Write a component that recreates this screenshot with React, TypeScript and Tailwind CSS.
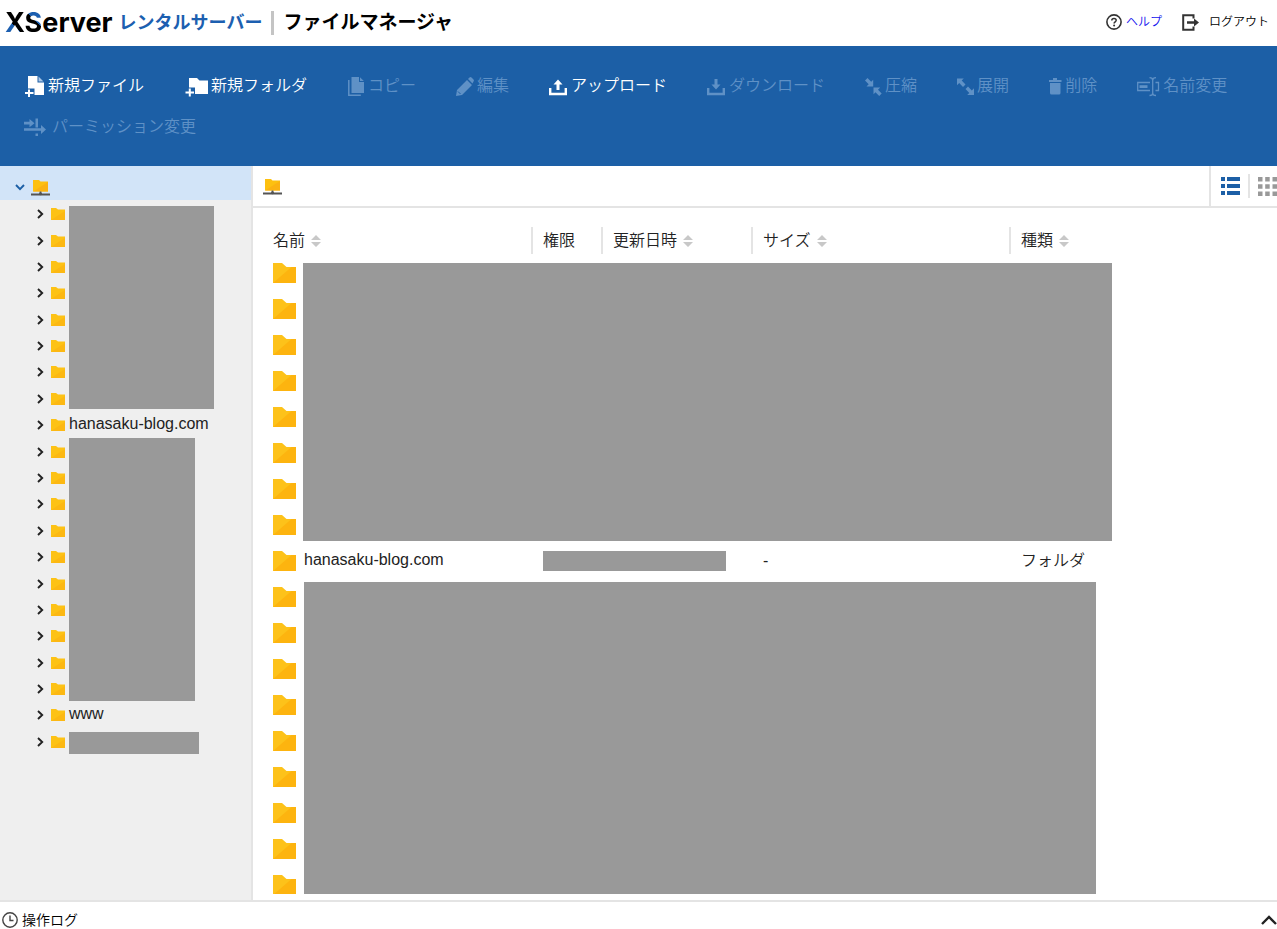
import React from "react";

type IconProps = { className?: string };

function NewFileIcon() {
  return (
    <svg width="22" height="22" viewBox="0 0 22 22" className="shrink-0" aria-hidden="true">
      <path d="M4 1h9.500v6.500H20V20h-9.500v-6.500H4z" fill="#fff" />
      <path d="M14.500 1.500l5 5h-5z" fill="#a9c6e6" />
      <path d="M5 14.500v7.500M1 18h8.500" stroke="#fff" strokeWidth="2" fill="none" />
    </svg>
  );
}

function NewFolderIcon() {
  return (
    <svg width="26" height="22" viewBox="0 0 26 22" className="shrink-0" aria-hidden="true">
      <path d="M5 3h8l2.500 2.500H24V19H11v-6.500H5z" fill="#fff" />
      <path d="M5.800 13.500v8M1.500 17.500h8.500" stroke="#fff" strokeWidth="2" fill="none" />
    </svg>
  );
}

function CopyIcon() {
  return (
    <svg width="20" height="22" viewBox="0 0 20 22" className="shrink-0" aria-hidden="true">
      <path d="M4.500 2h7.500v5h5v11H4.500z" fill="currentColor" />
      <path d="M13 2.200l3.800 3.800H13z" fill="currentColor" />
      <path d="M1.800 5v15.200h12" stroke="currentColor" strokeWidth="1.500" fill="none" />
    </svg>
  );
}

function EditIcon() {
  return (
    <svg width="20" height="22" viewBox="0 0 20 22" className="shrink-0" aria-hidden="true">
      <path d="M0 21l1-6L11 5l5 5L6 20z M12 4l1.500-1.500q1-.8 2 0l2 2q1 1 0 2L16.500 8.500z" fill="currentColor" />
      <path d="M2 16.500l2.500 2.500" stroke="#1c5fa6" strokeWidth="1" />
    </svg>
  );
}

function TransferIcon({ down = false }: { down?: boolean }) {
  return (
    <svg width="20" height="22" viewBox="0 0 20 22" className="shrink-0" aria-hidden="true">
      <path d="M1.200 13v6h15.600v-6" stroke="currentColor" strokeWidth="2.400" fill="none" />
      {down ? (
        <path d="M7.500 4h3v5.500h3L9 14.500 4.500 9.500h3z" fill="currentColor" />
      ) : (
        <path d="M7.500 15h3V9.500h3L9 4.500 4.500 9.500h3z" fill="currentColor" />
      )}
    </svg>
  );
}

function CompressIcon() {
  return (
    <svg width="18" height="22" viewBox="0 0 18 22" className="shrink-0" aria-hidden="true">
      <path d="M8.200 11.500H1.500L3.700 9.300 0 5.500 2.500 3 6.200 6.800 8.200 4.800z" fill="currentColor" />
      <path d="M8.500 12.500h6.700L13 14.700l3.700 3.800-2.500 2.500-3.700-3.800-2 2z" fill="currentColor" />
    </svg>
  );
}

function ExpandIcon() {
  return (
    <svg width="18" height="22" viewBox="0 0 18 22" className="shrink-0" aria-hidden="true">
      <path d="M0 3.500h6.800L4.700 5.600 8.500 9.400 6 11.900 2.200 8.100 0 10.200z" fill="currentColor" />
      <path d="M17 20h-6.800l2.100-2.100-3.800-3.800 2.500-2.500 3.800 3.800 2.200-2.100z" fill="currentColor" />
    </svg>
  );
}

function TrashIcon() {
  return (
    <svg width="14" height="22" viewBox="0 0 14 22" className="shrink-0" aria-hidden="true">
      <path d="M0 5h4V3h4v2h4.500v2H0z M1 8h10.500v10q0 1.500-1.500 1.500H2.500Q1 19.500 1 18z" fill="currentColor" />
    </svg>
  );
}

function RenameIcon() {
  return (
    <svg width="24" height="22" viewBox="0 0 24 22" className="shrink-0" aria-hidden="true">
      <g stroke="currentColor" strokeWidth="1.300" fill="none">
        <path d="M13 7.500H.7v8H13M18.500 7.500h3v8h-3" />
        <path d="M12.500 2.700q3.200 0 3.200 2.500v13q0 2.300-3.200 2.300M19 2.700q-3.300 0-3.300 2.500M19 20.500q-3.300 0-3.300-2.300" />
      </g>
      <path d="M2.500 10.200h8v2.800h-8z" fill="currentColor" />
    </svg>
  );
}

function PermissionIcon() {
  return (
    <svg width="24" height="22" viewBox="0 0 24 22" className="shrink-0" aria-hidden="true">
      <g fill="currentColor">
        <path d="M0 5.800h5.500V3L10.500 7.200 5.500 11.300V8.600H0z" />
        <path d="M11.500 2.500H14v9h-2.500z M11.500 17.500H14V20h-2.500z" />
        <path d="M0 12.200h17V9l5 4.500-5 4.500v-3.300H0z" />
      </g>
    </svg>
  );
}

function NetworkFolderIcon() {
  return (
    <svg width="19" height="17" viewBox="0 0 19 17" className="shrink-0" aria-hidden="true">
      <path d="M2 1h6l1.500 1.500H17V12.500H2z" fill="#fdc010" />
      <path d="M2 12.500L17 3v9.500z" fill="#fbb212" />
      <path d="M9.500 12.500v2M0 15.500h19" stroke="#555" strokeWidth="1.800" />
      <circle cx="9.500" cy="14.700" r="1.500" fill="#555" />
    </svg>
  );
}

function SmallFolder() {
  return (
    <svg width="14" height="12" viewBox="0 0 14 12" className="shrink-0" aria-hidden="true">
      <path d="M0 0h5l2 1.500h7V12H0z" fill="#fdc215" />
      <path d="M0 12L14 3v9z" fill="#fcb813" />
    </svg>
  );
}

function LargeFolder() {
  return (
    <svg width="23" height="20" viewBox="0 0 23 20" className="block" aria-hidden="true">
      <path d="M0 0h9l4.500 4H23v16H0z" fill="#fdc21a" />
      <path d="M0 20L18.500 4H23v16z" fill="#fdb40f" />
    </svg>
  );
}

function Chevron({ className }: IconProps) {
  return (
    <svg width="10" height="10" viewBox="0 0 10 10" className={className} aria-hidden="true">
      <path d="M3 1l4.200 4L3 9" fill="none" stroke="currentColor" strokeWidth="1.900" />
    </svg>
  );
}

function SortIcon() {
  return (
    <svg width="10" height="12" viewBox="0 0 10 12" className="shrink-0" aria-hidden="true">
      <path d="M5 0l5 5H0zM5 12L0 7h10z" fill="#c8c8c8" />
    </svg>
  );
}

const tools = [
  { label: "新規ファイル", icon: <NewFileIcon />, enabled: true, box: "w-6" },
  { label: "新規フォルダ", icon: <NewFolderIcon />, enabled: true, box: "w-[27px]" },
  { label: "コピー", icon: <CopyIcon />, enabled: false, box: "w-[21px]" },
  { label: "編集", icon: <EditIcon />, enabled: false, box: "w-[21px]" },
  { label: "アップロード", icon: <TransferIcon />, enabled: true, box: "w-[22px]" },
  { label: "ダウンロード", icon: <TransferIcon down />, enabled: false, box: "w-[22px]" },
  { label: "圧縮", icon: <CompressIcon />, enabled: false, box: "w-5" },
  { label: "展開", icon: <ExpandIcon />, enabled: false, box: "w-5" },
  { label: "削除", icon: <TrashIcon />, enabled: false, box: "w-4" },
  { label: "名前変更", icon: <RenameIcon />, enabled: false, box: "w-[26px]" },
  { label: "パーミッション変更", icon: <PermissionIcon />, enabled: false, box: "w-7" },
];

function Header() {
  return (
    <header className="flex h-[46px] shrink-0 items-center justify-between pr-2 pl-[5px]">
      <h1 className="flex items-center font-bold text-black">
        <span className="font-['Inter'] text-[27px] leading-8">
          <span className="bg-[linear-gradient(45deg,#1c5fb0_42%,#000_42%)] bg-clip-text text-transparent">X</span>
          <span className="bg-[linear-gradient(45deg,#000_57%,#1c5fb0_57%)] bg-clip-text text-transparent">S</span>
          erver
        </span>
        <span className="ml-[6px] text-[18px] leading-8 text-[#1c5fb0]">レンタルサーバー</span>
        <span className="mx-[9px] h-6 w-[3px] bg-[#c4c4c4]" />
        <span className="text-[19px] leading-8">ファイルマネージャ</span>
      </h1>
      <nav className="flex items-center gap-5 pb-[2px] text-xs">
        <a href="#help" className="flex items-center gap-1 text-[#1010ee]">
          <svg width="16" height="16" viewBox="0 0 16 16" aria-hidden="true">
            <circle cx="8" cy="8" r="7.100" fill="none" stroke="#333" strokeWidth="1.600" />
            <path d="M5.800 6.500q0-2.100 2.200-2.100t2.200 1.900c0 1.500-2.100 1.500-2.100 3.200" fill="none" stroke="#333" strokeWidth="1.500" />
            <circle cx="8.100" cy="11.500" r="1" fill="#333" />
          </svg>
          ヘルプ
        </a>
        <a href="#logout" className="flex items-center gap-[10px] text-black">
          <svg width="17" height="17" viewBox="0 0 17 17" aria-hidden="true">
            <path d="M11.500 4.500V1.200H1.200v14.600h10.300v-3.300" fill="none" stroke="#333" strokeWidth="2" />
            <path d="M5 7.300h7V4.500l5 4-5 4V9.700H5z" fill="#333" />
          </svg>
          ログアウト
        </a>
      </nav>
    </header>
  );
}

function Toolbar() {
  return (
    <div role="toolbar" className="flex shrink-0 flex-wrap gap-x-10 bg-[#1c5fa6] px-6 py-[19px]">
      {tools.map((t) => (
        <button
          key={t.label}
          type="button"
          disabled={!t.enabled}
          className={
            t.enabled
              ? "flex h-[41px] items-center text-base whitespace-nowrap text-white"
              : "flex h-[41px] items-center text-base whitespace-nowrap text-[#5f91c6]"
          }
        >
          <span className={`flex shrink-0 ${t.box}`}>{t.icon}</span>
          {t.label}
        </button>
      ))}
    </div>
  );
}

type Entry = { name?: string; rows: number; className?: string };

const treeEntries: Entry[] = [
  { rows: 8, className: "row-span-8 mt-[6px] mb-[2px] w-[145px] bg-[#999]" },
  { rows: 1, name: "hanasaku-blog.com" },
  { rows: 10, className: "row-span-10 mt-px w-[126px] bg-[#999]" },
  { rows: 1, name: "www" },
  { rows: 1, className: "mt-1 w-[130px] bg-[#999]" },
];

function TreeToggle() {
  return (
    <button type="button" aria-label="フォルダを開く" className="col-start-1 flex items-center gap-[6px] pt-[2px]">
      <Chevron className="text-[#222]" />
      <SmallFolder />
    </button>
  );
}

function Tree() {
  return (
    <aside className="w-[253px] shrink-0 border-r-2 border-[#e4e4e4] bg-[#efefef]">
      <button type="button" aria-label="ルート" className="flex h-[34px] w-full items-center gap-[6px] bg-[#d2e4f8] pt-2 pl-[15px]">
        <Chevron className="rotate-90 text-[#1c5fa6]" />
        <NetworkFolderIcon />
      </button>
      <div className="grid h-[554px] auto-rows-fr grid-cols-[34px_1fr] pl-[35px] text-base text-[#222]">
        {treeEntries.map((e, i) => (
          <React.Fragment key={i}>
            <TreeToggle />
            {e.name ? (
              <a href={`#${e.name}`} className="col-start-2 self-center leading-6">
                {e.name}
              </a>
            ) : (
              <div className={`col-start-2 ${e.className}`} />
            )}
            {Array.from({ length: e.rows - 1 }, (_, r) => (
              <TreeToggle key={r} />
            ))}
          </React.Fragment>
        ))}
      </div>
    </aside>
  );
}

function HeadCell({ label, sortable = true, divided = true }: { label: string; sortable?: boolean; divided?: boolean }) {
  return (
    <div
      className={
        divided
          ? "flex h-[27px] items-center gap-[6px] border-l-2 border-[#e4e4e4] pl-[10px]"
          : "flex h-[27px] items-center gap-[6px]"
      }
    >
      {label}
      {sortable && <SortIcon />}
    </div>
  );
}

function FolderCell() {
  return (
    <td className="h-9 p-0">
      <LargeFolder />
    </td>
  );
}

function FileTable() {
  const fillerRows = (count: number, prefix: string) =>
    Array.from({ length: count }, (_, i) => (
      <tr key={`${prefix}${i}`} className="h-9">
        <FolderCell />
      </tr>
    ));
  return (
    <div className="mb-[6px] min-h-0 flex-1 overflow-hidden pt-[18px] pl-5">
      <table className="w-full table-fixed border-collapse text-left text-base text-[#222]">
        <colgroup>
          <col className="w-[30px]" />
          <col className="w-[228px]" />
          <col className="w-[70px]" />
          <col className="w-[150px]" />
          <col className="w-[258px]" />
          <col />
        </colgroup>
        <thead>
          <tr className="h-[29px]">
            <th colSpan={2} className="p-0 font-[350]"><HeadCell label="名前" divided={false} /></th>
            <th className="p-0 font-[350]"><HeadCell label="権限" sortable={false} /></th>
            <th className="p-0 font-[350]"><HeadCell label="更新日時" /></th>
            <th className="p-0 font-[350]"><HeadCell label="サイズ" /></th>
            <th className="p-0 font-[350]"><HeadCell label="種類" /></th>
          </tr>
        </thead>
        <tbody>
          <tr className="h-9">
            <FolderCell />
            <td rowSpan={8} colSpan={5} className="p-0 pt-[6px]">
              <div className="h-[278px] w-[809px] bg-[#999]" />
            </td>
          </tr>
          {fillerRows(7, "a")}
          <tr className="h-9">
            <FolderCell />
            <td className="p-0 pl-px">
              <a href="#hanasaku-blog.com" className="block pb-[2px] leading-6">hanasaku-blog.com</a>
            </td>
            <td colSpan={2} className="p-0 pl-3">
              <div className="h-5 w-[183px] bg-[#999]" />
            </td>
            <td className="p-0 pl-3">-</td>
            <td className="p-0 pl-3">フォルダ</td>
          </tr>
          <tr className="h-9">
            <FolderCell />
            <td rowSpan={9} colSpan={5} className="p-0 pt-[3px] pl-px align-top">
              <div className="h-[321px] w-[792px] bg-[#999]" />
            </td>
          </tr>
          {fillerRows(8, "b")}
        </tbody>
      </table>
    </div>
  );
}

function PathBar() {
  return (
    <div className="flex h-[42px] shrink-0 items-stretch border-b-2 border-[#e4e4e4]">
      <button type="button" aria-label="ルート" className="mr-auto ml-[10px] flex items-center">
        <NetworkFolderIcon />
      </button>
      <div className="flex items-center border-l-2 border-[#e4e4e4] pl-[10px]">
        <button type="button" aria-label="リスト表示">
          <svg width="19" height="18" viewBox="0 0 19 18" className="block" aria-hidden="true">
            <path d="M0 0h4v4H0zM6 0h13v4H6zM0 7h4v4H0zM6 7h13v4H6zM0 14h4v4H0zM6 14h13v4H6z" fill="#1c5fa6" />
          </svg>
        </button>
        <span className="mx-2 h-6 w-[2px] bg-[#e4e4e4]" />
        <button type="button" aria-label="アイコン表示">
          <svg width="19" height="19" viewBox="0 0 19 19" className="block" aria-hidden="true">
            <path d="M0 0h4.500v4.500H0zM7.200 0h4.500v4.500H7.200zM14.500 0H19v4.500h-4.500zM0 7.200h4.500v4.500H0zM7.200 7.200h4.500v4.500H7.200zM14.500 7.200H19v4.500h-4.500zM0 14.500h4.500V19H0zM7.200 14.500h4.500V19H7.200zM14.500 14.500H19V19h-4.500z" fill="#999" />
          </svg>
        </button>
      </div>
    </div>
  );
}

export default function App() {
  return (
    <div className="flex h-screen flex-col overflow-hidden bg-white font-['Liberation_Sans','Noto_Sans_CJK_JP',sans-serif] font-[350]">
      <Header />
      <Toolbar />
      <div className="flex min-h-0 flex-1">
        <Tree />
        <main className="flex min-w-0 flex-1 flex-col">
          <PathBar />
          <FileTable />
        </main>
      </div>
      <footer className="flex h-[29px] shrink-0 items-center justify-between border-t-2 border-[#e4e4e4] pt-2 text-sm text-black">
        <span className="flex items-center gap-1 pl-[2px]">
          <svg width="16" height="16" viewBox="0 0 16 16" aria-hidden="true">
            <circle cx="8" cy="8" r="7.200" fill="none" stroke="#444" strokeWidth="1.400" />
            <path d="M8 3.500V8.500H11.500" fill="none" stroke="#444" strokeWidth="1.400" />
          </svg>
          操作ログ
        </span>
        <button type="button" aria-label="操作ログを開く">
          <svg width="16" height="10" viewBox="0 0 16 10" className="block" aria-hidden="true">
            <path d="M1 9l7-7 7 7" fill="none" stroke="#222" strokeWidth="2.400" />
          </svg>
        </button>
      </footer>
    </div>
  );
}
